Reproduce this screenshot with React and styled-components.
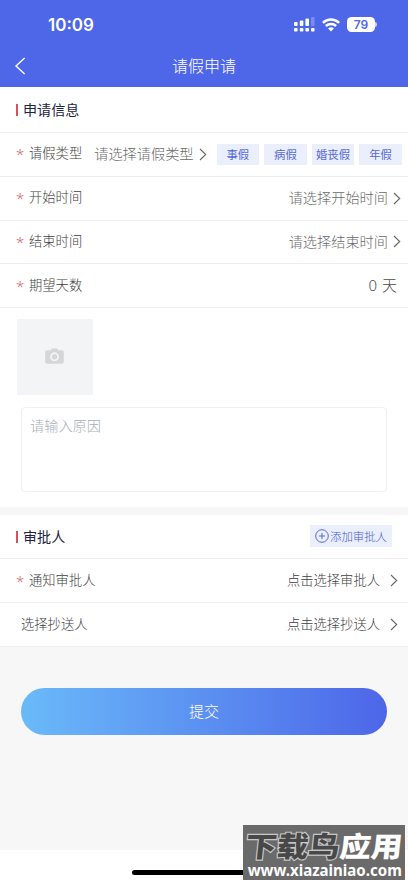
import React from 'react';
import styled, { createGlobalStyle } from 'styled-components';

const GlobalStyle = createGlobalStyle`
  * {
    box-sizing: border-box;
  }

  body {
    margin: 0;
    background: #fff;
    font-family: "Noto Sans CJK SC", sans-serif;
    font-weight: 300;
  }
`;

const Page = styled.div`
  position: relative;
  width: 408px;
  height: 883px;
  overflow: hidden;
  display: flex;
  flex-direction: column;
  background: #fff;
`;

const Header = styled.header`
  height: 87px;
  background: #4e67e8;
  color: #fff;
`;

const StatusBar = styled.div`
  display: flex;
  align-items: center;
  justify-content: space-between;
  height: 48px;
  padding: 1px 31px 0 48px;
`;

const Clock = styled.span`
  font-family: Inter, sans-serif;
  font-size: 17px;
  font-weight: 600;
  line-height: 20px;
`;

const StatusIcons = styled.div`
  display: flex;
  align-items: center;
  gap: 7px;

  svg {
    display: block;
  }
`;

const Battery = styled.div`
  display: flex;
  align-items: center;
`;

const BatteryLevel = styled.span`
  width: 28px;
  height: 15px;
  border-radius: 4.5px;
  background: #fff;
  color: #4e67e8;
  font-family: Inter, sans-serif;
  font-size: 12px;
  font-weight: 600;
  line-height: 15px;
  text-align: center;
`;

const BatteryCap = styled.span`
  width: 2px;
  height: 5px;
  border-radius: 0 2px 2px 0;
  background: #c7cff8;
`;

const NavBar = styled.div`
  display: grid;
  grid-template-columns: 40px 1fr 40px;
  align-items: center;
  height: 36px;

  svg {
    margin-left: 14px;
  }
`;

const NavTitle = styled.h1`
  margin: -2px 0 0;
  font-size: 16px;
  font-weight: 300;
  line-height: 24px;
  text-align: center;
`;

const Panel = styled.section`
  background: #fff;
`;

const PanelHead = styled.div`
  display: flex;
  align-items: center;
  justify-content: space-between;
  height: ${(props) => props.$height}px;
  padding: 0 16px 2px;
  border-bottom: 1px solid #f0f0f0;
`;

const PanelTitle = styled.h2`
  display: flex;
  align-items: center;
  gap: 5px;
  margin: 0;
  color: #1d2340;
  font-size: 14.1px;
  font-weight: 400;
  line-height: 20px;

  &::before {
    content: "";
    width: 2px;
    height: 12px;
    margin-top: 2px;
    background: #d9505c;
  }
`;

const Row = styled.div`
  display: flex;
  align-items: center;
  height: ${(props) => props.$height || 43.75}px;
  padding: 0 ${(props) => props.$right || 7}px 0 ${(props) => (props.$required ? 16 : 21)}px;
  border-bottom: 1px solid #efefef;
`;

const Star = styled.span`
  width: 13px;
  color: #d6636a;
  font-family: "Noto Sans", sans-serif;
  font-weight: 300;
  font-size: 15px;
  line-height: 20px;
`;

const Label = styled.span`
  color: #3e3e3e;
  font-size: 13.3px;
  line-height: 20px;
  white-space: nowrap;
  transform: translateY(-1px);
`;

const Value = styled.span`
  margin-left: ${(props) => props.$left || 'auto'};
  margin-right: ${(props) => props.$gap || 5}px;
  color: ${(props) => props.$color || '#6a6a6a'};
  font-size: ${(props) => props.$size || 14.2}px;
  line-height: 20px;
  white-space: nowrap;
  transform: translateY(-1px);
`;

const Days = styled(Value)`
  font-family: "Noto Sans", "Noto Sans CJK SC", sans-serif;
  word-spacing: 1px;
`;

const Tags = styled.div`
  display: flex;
  gap: 5px;
  margin-left: 10px;
`;

const Tag = styled.span`
  width: 42.6px;
  height: 21px;
  background: #ebeffc;
  color: #5468d8;
  font-size: 11.4px;
  font-weight: 400;
  line-height: 20px;
  text-align: center;
  white-space: nowrap;
`;

const Attachments = styled.div`
  height: 199px;
  padding: 11px 21px 0 17px;
`;

const Upload = styled.div`
  display: flex;
  align-items: center;
  justify-content: center;
  width: 76px;
  height: 76px;
  padding: 0 1px 2px 0;
  border-radius: 1px;
  background: #f3f4f6;
`;

const Reason = styled.div`
  height: 85px;
  margin: 12px 0 0 4px;
  padding: 7px 8px;
  border: 1px solid #f0f0f0;
  border-radius: 4px;
  color: #a9adb8;
  font-size: 14.2px;
  line-height: 20px;
`;

const Divider = styled.div`
  height: 8px;
  background: #f7f7f7;
`;

const AddButton = styled.div`
  display: flex;
  align-items: center;
  justify-content: center;
  gap: 1px;
  width: 82px;
  height: 22px;
  margin: 1px 0 0;
  background: #ebeffc;
  color: #4359d2;
  font-size: 11.4px;
  line-height: 20px;
  white-space: nowrap;
`;

const Footer = styled.div`
  height: 203px;
  padding: 41px 21px 0;
  background: #f7f7f8;
`;

const Submit = styled.div`
  height: 47px;
  border-radius: 24px;
  background: linear-gradient(90deg, #6abaf9, #4d66e9);
  color: #fff;
  font-size: 15px;
  line-height: 45px;
  text-align: center;
`;

const HomeIndicator = styled.div`
  width: 144px;
  height: 5px;
  margin: 20px auto 0;
  border-radius: 3px;
  background: #000;
`;

const Watermark = styled.div`
  position: absolute;
  left: 243px;
  top: 825px;
  width: 162px;
  height: 55px;
  background: #6a6a6a;
  color: #fff;
`;

const MarkName = styled.div`
  height: 36px;
  padding-left: 3px;
  font-size: 31.4px;
  font-weight: 900;
  line-height: 42px;
  white-space: nowrap;
  transform: skewX(-6deg) scaleY(0.9);

  span {
    color: #484848;
    paint-order: stroke fill;
    -webkit-text-stroke: 2.4px #c8c8c8;
  }
`;

const MarkUrl = styled.div`
  width: max-content;
  padding-left: 5px;
  font-family: "Noto Sans", sans-serif;
  font-size: 16px;
  font-weight: 700;
  line-height: 18px;
  white-space: nowrap;
  transform: scaleX(0.94);
  transform-origin: left;
`;

function Chevron() {
  return (
    <svg width="8" height="13" viewBox="0 0 8 13" fill="none" stroke="#666" strokeWidth="1.1">
      <path d="M1 1l5.7 5.5L1 12" />
    </svg>
  );
}

function Signal() {
  return (
    <svg width="21" height="15" viewBox="0 0 21 15" fill="#fff">
      <rect x="0" y="5" width="3.6" height="4" rx="1" />
      <rect x="5.8" y="3.5" width="3.6" height="5.5" rx="1" />
      <rect x="11.4" y="1.5" width="3.6" height="7.5" rx="1" />
      <rect x="17" y="0" width="3.6" height="9" rx="1" opacity=".25" />
      <rect x="0" y="11" width="3.6" height="3.5" rx="1" />
      <rect x="5.8" y="11" width="3.6" height="3.5" rx="1" />
      <rect x="11.4" y="11" width="3.6" height="3.5" rx="1" />
      <rect x="17" y="11" width="3.6" height="3.5" rx="1" />
    </svg>
  );
}

function Wifi() {
  return (
    <svg width="18" height="14" viewBox="0 0 18 14" fill="none" stroke="#fff" strokeWidth="2.5">
      <path d="M.9 4.8a11.6 11.6 0 0 1 16.2 0" />
      <path d="M3.9 8a7.3 7.3 0 0 1 10.2 0" />
      <path d="M9 13.5L6.1 10.6a4.2 4.2 0 0 1 5.8 0z" fill="#fff" stroke="none" />
    </svg>
  );
}

function Camera() {
  return (
    <svg width="19" height="16" viewBox="0 0 19 16">
      <path
        d="M2 2.3h3.5L7 .4h5l1.5 1.9H17a1.8 1.8 0 0 1 1.8 1.8V14a1.8 1.8 0 0 1-1.8 1.8H2A1.8 1.8 0 0 1 .2 14V4.1A1.8 1.8 0 0 1 2 2.3z"
        fill="#d5d6d8"
      />
      <circle cx="9.5" cy="8.8" r="3.6" fill="none" stroke="#f3f4f6" strokeWidth="1.7" />
    </svg>
  );
}

const leaveTypes = ['事假', '病假', '婚丧假', '年假'];

export default function App() {
  return (
    <Page>
      <GlobalStyle />
      <Header>
        <StatusBar>
          <Clock>10:09</Clock>
          <StatusIcons>
            <Signal />
            <Wifi />
            <Battery>
              <BatteryLevel>79</BatteryLevel>
              <BatteryCap />
            </Battery>
          </StatusIcons>
        </StatusBar>
        <NavBar>
          <svg width="12" height="18" viewBox="0 0 12 18" fill="none" stroke="#fff" strokeWidth="1.4">
            <path d="M10.6 1L2 9l8.6 8" />
          </svg>
          <NavTitle>请假申请</NavTitle>
        </NavBar>
      </Header>

      <Panel>
        <PanelHead $height={46}>
          <PanelTitle>申请信息</PanelTitle>
        </PanelHead>
        <Row $required $right={5}>
          <Star>*</Star>
          <Label>请假类型</Label>
          <Value $left="12px">请选择请假类型</Value>
          <Chevron />
          <Tags>
            {leaveTypes.map((type) => (
              <Tag key={type}>{type}</Tag>
            ))}
          </Tags>
        </Row>
        <Row $required>
          <Star>*</Star>
          <Label>开始时间</Label>
          <Value>请选择开始时间</Value>
          <Chevron />
        </Row>
        <Row $required>
          <Star>*</Star>
          <Label>结束时间</Label>
          <Value>请选择结束时间</Value>
          <Chevron />
        </Row>
        <Row $required>
          <Star>*</Star>
          <Label>期望天数</Label>
          <Days $size={15} $gap={4} $color="#4c4c4c">0 天</Days>
        </Row>
        <Attachments>
          <Upload>
            <Camera />
          </Upload>
          <Reason>请输入原因</Reason>
        </Attachments>
      </Panel>
      <Divider />

      <Panel>
        <PanelHead $height={44}>
          <PanelTitle>审批人</PanelTitle>
          <AddButton>
            <svg width="14" height="14" viewBox="0 0 14 14" fill="none" stroke="#5468d8">
              <circle cx="7" cy="7" r="6.3" />
              <path d="M7 4v6M4 7h6" />
            </svg>
            添加审批人
          </AddButton>
        </PanelHead>
        <Row $required $height={44} $right={10}>
          <Star>*</Star>
          <Label>通知审批人</Label>
          <Value $size={13.3} $gap={10} $color="#3e3e3e">点击选择审批人</Value>
          <Chevron />
        </Row>
        <Row $height={44} $right={10}>
          <Label>选择抄送人</Label>
          <Value $size={13.3} $gap={10} $color="#3e3e3e">点击选择抄送人</Value>
          <Chevron />
        </Row>
      </Panel>

      <Footer>
        <Submit>提交</Submit>
      </Footer>
      <HomeIndicator />

      <Watermark>
        <MarkName><span>下载鸟</span>应用</MarkName>
        <MarkUrl>www.xiazainiao.com</MarkUrl>
      </Watermark>
    </Page>
  );
}
